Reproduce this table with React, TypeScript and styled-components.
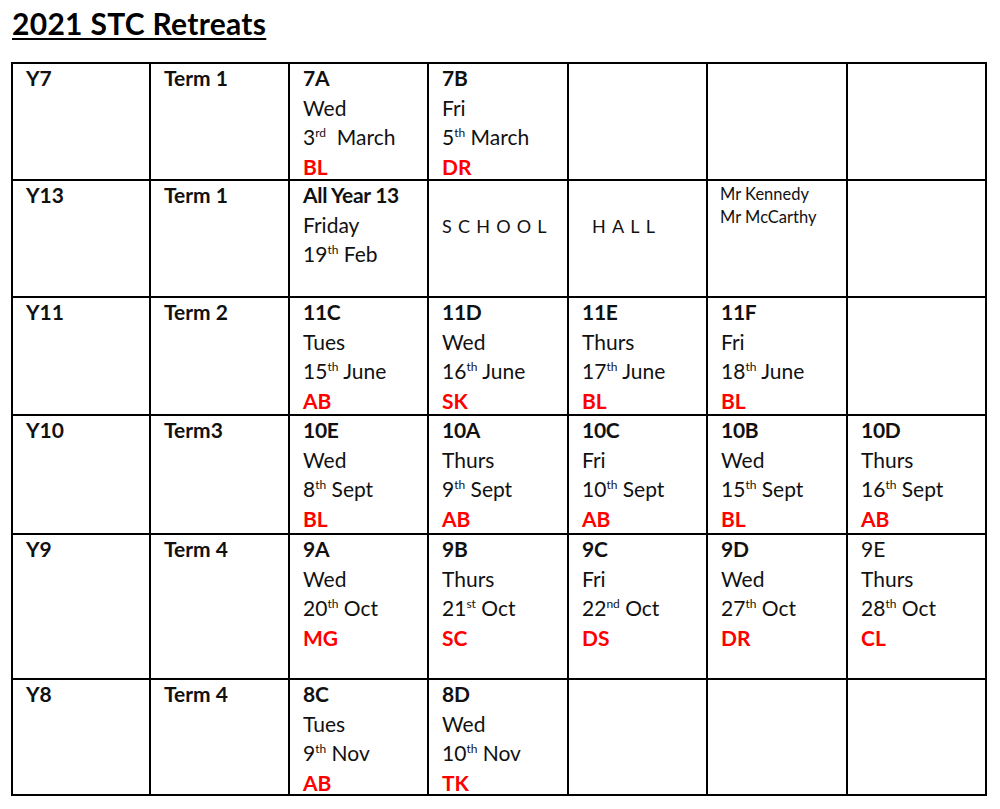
import React from "react";
import { styled, createGlobalStyle } from "styled-components";

type Line = { text: string; sup?: string; rest?: string };
type Slot = {
  group?: string;
  day?: string;
  date?: Line;
  staff?: string;
  note?: "school" | "hall" | "names";
  boldGroup?: boolean;
};

type Row = { year: string; term: string; height: number; slots: Slot[] };

const rows: Row[] = [
  {
    year: "Y7",
    term: "Term 1",
    height: 117,
    slots: [
      { group: "7A", day: "Wed", date: { text: "3", sup: "rd", rest: "  March" }, staff: "BL" },
      { group: "7B", day: "Fri", date: { text: "5", sup: "th", rest: " March" }, staff: "DR" },
      {},
      {},
      {},
    ],
  },
  {
    year: "Y13",
    term: "Term 1",
    height: 117,
    slots: [
      { group: "All Year 13", day: "Friday", date: { text: "19", sup: "th", rest: " Feb" } },
      { note: "school" },
      { note: "hall" },
      { note: "names" },
      {},
    ],
  },
  {
    year: "Y11",
    term: "Term 2",
    height: 118,
    slots: [
      { group: "11C", day: "Tues", date: { text: "15", sup: "th", rest: " June" }, staff: "AB" },
      { group: "11D", day: "Wed", date: { text: "16", sup: "th", rest: " June" }, staff: "SK" },
      { group: "11E", day: "Thurs", date: { text: "17", sup: "th", rest: " June" }, staff: "BL" },
      { group: "11F", day: "Fri", date: { text: "18", sup: "th", rest: " June" }, staff: "BL" },
      {},
    ],
  },
  {
    year: "Y10",
    term: "Term3",
    height: 119,
    slots: [
      { group: "10E", day: "Wed", date: { text: "8", sup: "th", rest: " Sept" }, staff: "BL" },
      { group: "10A", day: "Thurs", date: { text: "9", sup: "th", rest: " Sept" }, staff: "AB" },
      { group: "10C", day: "Fri", date: { text: "10", sup: "th", rest: " Sept" }, staff: "AB" },
      { group: "10B", day: "Wed", date: { text: "15", sup: "th", rest: " Sept" }, staff: "BL" },
      { group: "10D", day: "Thurs", date: { text: "16", sup: "th", rest: " Sept" }, staff: "AB" },
    ],
  },
  {
    year: "Y9",
    term: "Term 4",
    height: 145,
    slots: [
      { group: "9A", day: "Wed", date: { text: "20", sup: "th", rest: " Oct" }, staff: "MG" },
      { group: "9B", day: "Thurs", date: { text: "21", sup: "st", rest: " Oct" }, staff: "SC" },
      { group: "9C", day: "Fri", date: { text: "22", sup: "nd", rest: " Oct" }, staff: "DS" },
      { group: "9D", day: "Wed", date: { text: "27", sup: "th", rest: " Oct" }, staff: "DR" },
      { group: "9E", boldGroup: false, day: "Thurs", date: { text: "28", sup: "th", rest: " Oct" }, staff: "CL" },
    ],
  },
  {
    year: "Y8",
    term: "Term 4",
    height: 116,
    slots: [
      { group: "8C", day: "Tues", date: { text: "9", sup: "th", rest: " Nov" }, staff: "AB" },
      { group: "8D", day: "Wed", date: { text: "10", sup: "th", rest: " Nov" }, staff: "TK" },
      {},
      {},
      {},
    ],
  },
];

const GlobalStyle = createGlobalStyle`
  body {
    margin: 0;
    background: #ffffff;
    color: #000000;
    font-family: Lato, "Open Sans", sans-serif;
  }
`;

const Page = styled.div`
  padding: 5px 0 0 11px;
`;

const Title = styled.h1`
  margin: 0 0 20px 1px;
  font-size: 30px;
  line-height: 37px;
  font-weight: 700;
  letter-spacing: 0.3px;
  text-decoration: underline;
  text-decoration-thickness: 2px;
  text-underline-offset: 3px;
`;

const Table = styled.table`
  border-collapse: collapse;
  table-layout: fixed;
  width: 974px;
  border: 2px solid #000;
`;

const Cell = styled.td`
  border: 2px solid #000;
  vertical-align: top;
  padding: 0 4px 0 13px;
  font-size: 21px;
  line-height: 29.5px;
  color: #111;
`;

const Label = styled.div`
  font-weight: 700;
  margin-top: -1px;
`;

const Group = styled.div<{ $bold: boolean }>`
  font-weight: ${(p) => (p.$bold ? 700 : 400)};
  white-space: nowrap;
  letter-spacing: ${(p) => (p.$bold ? "-0.3px" : "0")};
  margin-top: -1px;
`;

const Plain = styled.div`
  white-space: pre;
`;

const Sup = styled.sup`
  font-size: 12px;
  line-height: 0;
  vertical-align: 8px;
`;

const Staff = styled.div`
  color: #ff0000;
  font-weight: 700;
  margin-bottom: -8px;
`;

const Spaced = styled.div<{ $indent: number }>`
  margin-top: 31px;
  padding-left: ${(p) => p.$indent}px;
  letter-spacing: 6.2px;
  font-size: 18px;
  white-space: nowrap;
`;

const Names = styled.div`
  font-size: 16.5px;
  line-height: 23px;
  margin-top: 2px;
  margin-left: -1px;
`;

function SlotCell({ slot }: { slot: Slot }) {
  if (slot.note === "school") {
    return (
      <Cell>
        <Spaced $indent={0}>SCHOOL</Spaced>
      </Cell>
    );
  }
  if (slot.note === "hall") {
    return (
      <Cell>
        <Spaced $indent={10}>HALL</Spaced>
      </Cell>
    );
  }
  if (slot.note === "names") {
    return (
      <Cell>
        <Names>
          <div>Mr Kennedy</div>
          <div>Mr McCarthy</div>
        </Names>
      </Cell>
    );
  }
  return (
    <Cell>
      {slot.group && <Group $bold={slot.boldGroup !== false}>{slot.group}</Group>}
      {slot.day && <Plain>{slot.day}</Plain>}
      {slot.date && (
        <Plain>
          {slot.date.text}
          <Sup>{slot.date.sup}</Sup>
          {slot.date.rest}
        </Plain>
      )}
      {slot.staff && <Staff>{slot.staff}</Staff>}
    </Cell>
  );
}

export default function App() {
  return (
    <Page>
      <GlobalStyle />
      <Title>2021 STC Retreats</Title>
      <Table>
        <colgroup>
          <col style={{ width: 138 }} />
          <col style={{ width: 139 }} />
          <col style={{ width: 139 }} />
          <col style={{ width: 140 }} />
          <col style={{ width: 139 }} />
          <col style={{ width: 140 }} />
          <col style={{ width: 139 }} />
        </colgroup>
        <tbody>
          {rows.map((row) => (
            <tr key={row.year} style={{ height: row.height }}>
              <Cell>
                <Label>{row.year}</Label>
              </Cell>
              <Cell>
                <Label>{row.term}</Label>
              </Cell>
              {row.slots.map((slot, i) => (
                <SlotCell key={i} slot={slot} />
              ))}
            </tr>
          ))}
        </tbody>
      </Table>
    </Page>
  );
}
